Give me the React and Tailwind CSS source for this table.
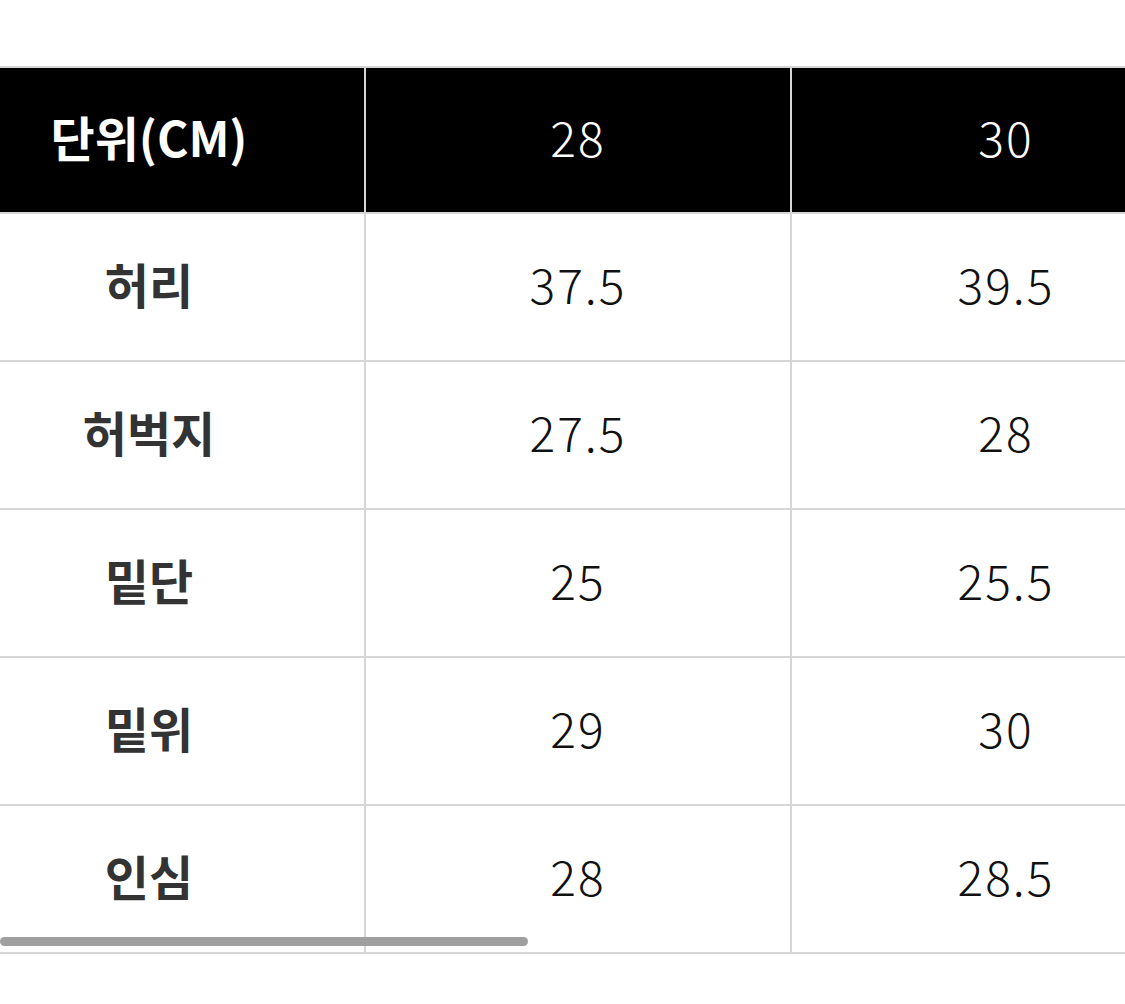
import React from 'react';

const rows = [
  ["허리", "37.5", "39.5"],
  ["허벅지", "27.5", "28"],
  ["밑단", "25", "25.5"],
  ["밑위", "29", "30"],
  ["인심", "28", "28.5"],
];

const font = { fontFamily: '"Noto Sans CJK KR", "Noto Sans", sans-serif' };

export default function App() {
  return (
    <div className="w-[1125px] h-[1004px] bg-white overflow-hidden" style={font}>
      <div className="pt-[66px]">
        <div className="relative overflow-hidden">
          <div className="w-[1220px] border-t-2 border-[#d6d6d6]">
            {/* header */}
            <div className="grid grid-cols-[366px_426px_428px] h-[146px] bg-black border-b-2 border-[#d6d6d6]">
              <div className="flex items-center justify-center pr-[66px] pb-2 border-r-2 border-[#d6d6d6] text-white font-bold text-[48px]">
                단위(CM)
              </div>
              <div className="flex items-center justify-center pb-2 border-r-2 border-[#d6d6d6] text-white font-light tracking-[2px] text-[48px]">
                28
              </div>
              <div className="flex items-center justify-center pb-2 text-white font-light tracking-[2px] text-[48px]">
                30
              </div>
            </div>

            {rows.map((r) => (
              <div key={r[0]} className="grid grid-cols-[366px_426px_428px] h-[148px] border-b-2 border-[#d6d6d6]">
                <div className="flex items-center justify-center pr-[66px] pb-2 border-r-2 border-[#d6d6d6] text-[#333333] font-bold text-[48px]">
                  {r[0]}
                </div>
                <div className="flex items-center justify-center pb-2 border-r-2 border-[#d6d6d6] text-[#111111] font-light tracking-[2px] text-[48px]">
                  {r[1]}
                </div>
                <div className="flex items-center justify-center pb-2 text-[#111111] font-light tracking-[2px] text-[48px]">
                  {r[2]}
                </div>
              </div>
            ))}
          </div>

          {/* horizontal scroll indicator */}
          <div className="absolute left-0 bottom-[8px] w-[528px] h-[9px] rounded-full bg-[#9f9f9f]" />
        </div>
      </div>
    </div>
  );
}
